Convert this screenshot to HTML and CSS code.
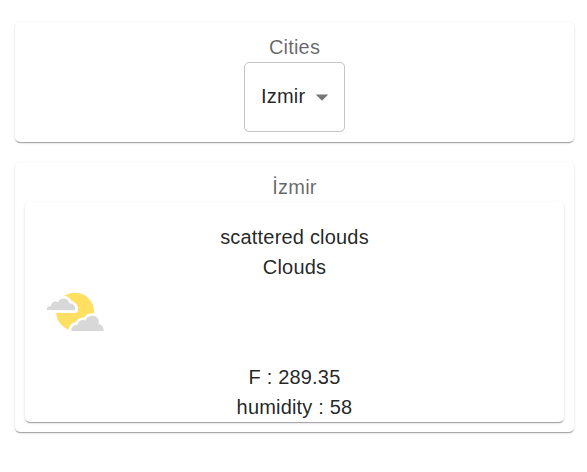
FILE: index.html
```html
<!DOCTYPE html>
<html lang="en">
<head>
<meta charset="utf-8">
<title>Weather</title>
<link rel="stylesheet" href="styles.css">
</head>
<body>
<main class="page">
  <section class="card cities">
    <div class="label">Cities</div>
    <div class="select" role="button" tabindex="0">
      <span class="value">Izmir</span>
      <svg class="arrow" viewBox="0 0 24 24"><path d="M7 10l5 5 5-5z"/></svg>
    </div>
  </section>
  <section class="card city">
    <div class="label">İzmir</div>
    <div class="card weather">
      <div>scattered clouds</div>
      <div>Clouds</div>
      <svg class="icon" viewBox="0 0 100 80">
        <g transform="translate(5 -2) scale(.33333)">
          <circle class="sun" cx="135" cy="95" r="57"/>
          <path class="cloud" d="M50 90C50 81 57 77 63 78C64 66 76 61 84 67C90 51 115 52 118 70C129 69 137 79 136 91Z"/>
          <path class="cloud" d="M124 153C123 141 132 133 143 134C144 124 156 117 166 122C173 102 203 103 207 124C206 128 205 131 205 133C215 132 222 142 221 153Z"/>
        </g>
      </svg>
      <div>F : 289.35</div>
      <div>humidity : 58</div>
    </div>
  </section>
</main>
</body>
</html>
```
FILE: styles.css
```css
body {
  margin: 0;
  background: #fff;
  color: rgba(0, 0, 0, 0.87);
  font: 20px/30px "Liberation Sans", Arial, sans-serif;
  letter-spacing: 0.19px;
  text-align: center;
}

.page {
  display: flex;
  flex-direction: column;
  gap: 20px;
  padding: 22px 13px 20px 15px;
}

.card {
  border-radius: 5px;
  background: #fff;
  box-shadow:
    0 2px 1px -1.25px rgba(0, 0, 0, 0.2),
    0 1px 1px 0 rgba(0, 0, 0, 0.14),
    0 1px 3px 0 rgba(0, 0, 0, 0.12);
}

.cities {
  display: flex;
  flex-direction: column;
  align-items: center;
  padding: 10px 0;
}

.label {
  color: rgba(0, 0, 0, 0.6);
}

.select {
  display: flex;
  align-items: center;
  box-sizing: border-box;
  width: 101px;
  height: 70px;
  padding-left: 16px;
  border: 1px solid rgba(0, 0, 0, 0.23);
  border-radius: 5px;
}

.value {
  padding-bottom: 2px;
}

.arrow {
  width: 30px;
  height: 30px;
  margin-left: 2px;
  fill: rgba(0, 0, 0, 0.54);
}

.city {
  padding: 10px;
}

.weather {
  padding-top: 20px;
}

.icon {
  display: block;
  width: 100px;
  height: 80px;
}

.sun {
  fill: #ffe063;
}

.cloud {
  fill: #d8d8d8;
  stroke: #fff;
  stroke-width: 16px;
  stroke-linejoin: round;
  paint-order: stroke;
}
```
